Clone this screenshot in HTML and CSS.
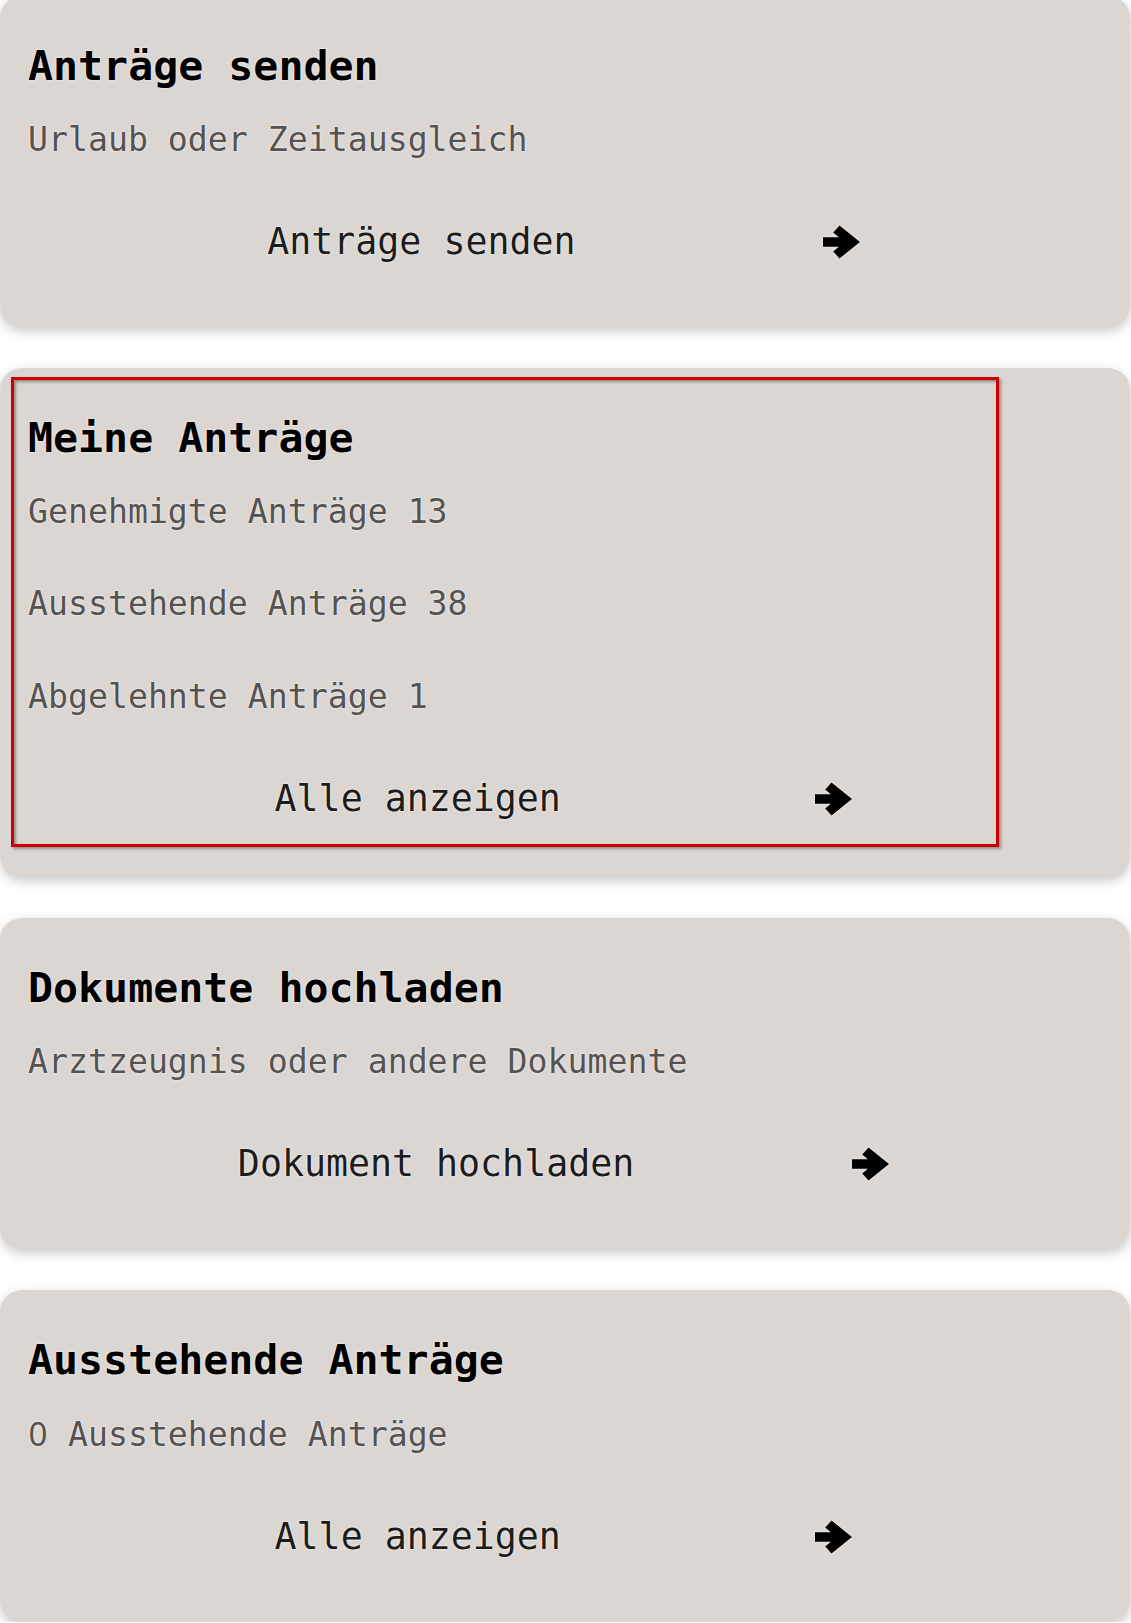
FILE: index.html
```html
<!DOCTYPE html>
<html lang="de">
<head>
<meta charset="utf-8">
<title>Anträge</title>
<link rel="stylesheet" href="styles.css">
</head>
<body>
<main class="list">
  <section class="card">
    <h2 class="card-title">Anträge senden</h2>
    <p class="card-line">Urlaub oder Zeitausgleich</p>
    <div class="card-action">
      <span class="action-label">Anträge senden</span>
      <svg class="arrow" viewBox="0 0 38 34" aria-hidden="true"><path d="M0 12.3H24V21.7H0Z M16.5 0.5 L37 17 L16.5 33.5 L10.2 26.5 L21.4 17 L10.2 7.5Z"/></svg>
    </div>
  </section>

  <section class="card card-tall">
    <div class="highlight-box"></div>
    <h2 class="card-title">Meine Anträge</h2>
    <p class="card-line">Genehmigte Anträge 13</p>
    <p class="card-line card-line-gap">Ausstehende Anträge 38</p>
    <p class="card-line card-line-gap">Abgelehnte Anträge 1</p>
    <div class="card-action">
      <span class="action-label">Alle anzeigen</span>
      <svg class="arrow" viewBox="0 0 38 34" aria-hidden="true"><path d="M0 12.3H24V21.7H0Z M16.5 0.5 L37 17 L16.5 33.5 L10.2 26.5 L21.4 17 L10.2 7.5Z"/></svg>
    </div>
  </section>

  <section class="card">
    <h2 class="card-title">Dokumente hochladen</h2>
    <p class="card-line">Arztzeugnis oder andere Dokumente</p>
    <div class="card-action">
      <span class="action-label">Dokument hochladen</span>
      <svg class="arrow" viewBox="0 0 38 34" aria-hidden="true"><path d="M0 12.3H24V21.7H0Z M16.5 0.5 L37 17 L16.5 33.5 L10.2 26.5 L21.4 17 L10.2 7.5Z"/></svg>
    </div>
  </section>

  <section class="card">
    <h2 class="card-title">Ausstehende Anträge</h2>
    <p class="card-line"><span class="digit">0</span> Ausstehende Anträge</p>
    <div class="card-action">
      <span class="action-label">Alle anzeigen</span>
      <svg class="arrow" viewBox="0 0 38 34" aria-hidden="true"><path d="M0 12.3H24V21.7H0Z M16.5 0.5 L37 17 L16.5 33.5 L10.2 26.5 L21.4 17 L10.2 7.5Z"/></svg>
    </div>
  </section>
</main>
</body>
</html>
```

FILE: styles.css
```css
html, body {
  margin: 0;
  padding: 0;
  background: #ffffff;
}

body {
  font-family: "DejaVu Sans Mono", "Liberation Mono", monospace;
  overflow: hidden;
}

.list {
  display: flex;
  flex-direction: column;
  gap: 41px;
  margin-top: -4px;
  width: 1130px;
}

.card {
  position: relative;
  background: #dbd6d2;
  border-radius: 22px;
  box-shadow: 0 4px 12px rgba(0, 0, 0, 0.22);
  padding: 45px 0 60px 0;
  display: flex;
  flex-direction: column;
}

.card-tall {
  padding-bottom: 53px;
}

.card-title {
  margin: 0;
  padding-left: 28px;
  font-size: 41.6px;
  line-height: 50px;
  font-weight: bold;
  color: #000000;
  text-shadow: 0 0 2px #f2f0ee, 0 0 2px #f2f0ee;
}

.card-line {
  margin: 28.5px 0 0 0;
  padding-left: 28px;
  font-size: 33.2px;
  line-height: 40px;
  color: #555352;
  text-shadow: 0 0 2px #f2f0ee, 0 0 2px #f2f0ee;
}

.card-line-gap {
  margin-top: 52.5px;
}

.digit {
  display: inline-block;
  width: 0.602em;
  text-align: center;
  font-family: "Noto Sans", "Open Sans", sans-serif;
}

.card-action {
  margin-top: 57.5px;
  padding: 0 22px 0 20px;
  height: 50px;
  display: flex;
  align-items: center;
  justify-content: space-evenly;
}

.action-label {
  font-size: 36.6px;
  line-height: 50px;
  color: #1c1c1c;
  text-shadow: 0 0 2px #f2f0ee, 0 0 2px #f2f0ee;
}

.arrow {
  width: 38px;
  height: 34px;
  fill: #000000;
  filter: drop-shadow(0 0 1.5px #f2f0ee);
}

.highlight-box {
  position: absolute;
  left: 11px;
  top: 9px;
  width: 988px;
  height: 470px;
  border: 3px solid #cc0000;
  box-sizing: border-box;
  box-shadow: 2px 2px 3px rgba(0, 0, 0, 0.35), inset 2px 2px 3px rgba(0, 0, 0, 0.35);
  pointer-events: none;
}
```
